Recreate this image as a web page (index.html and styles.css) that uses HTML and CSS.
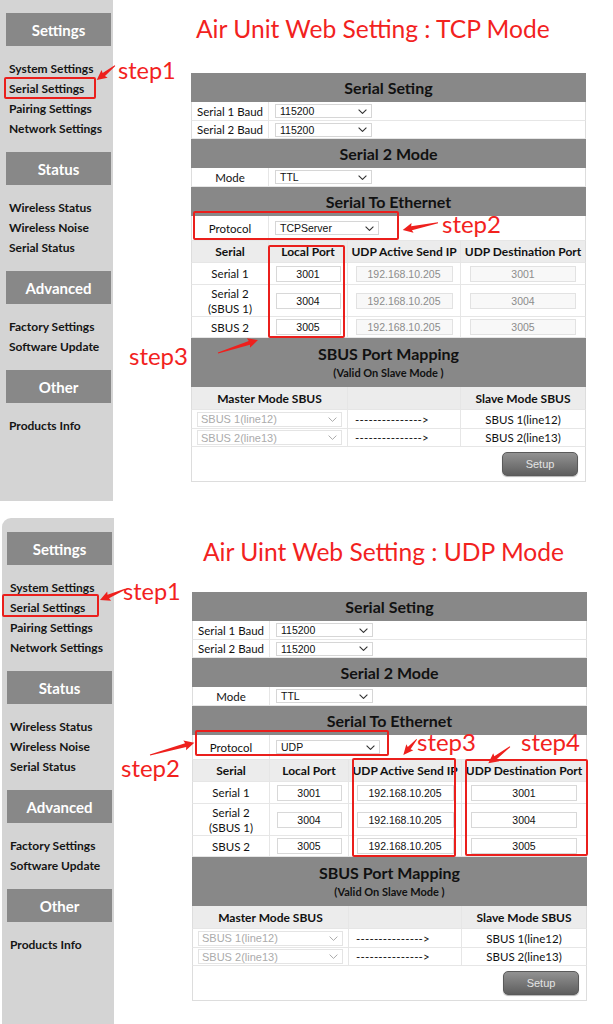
FILE: index.html
```html
<!DOCTYPE html>
<html>
<head>
<meta charset="utf-8">
<title>Air Unit Web Setting</title>
<link rel="stylesheet" href="styles.css">
</head>
<body>

<section class="panel panel--tcp">
  <aside class="sidebar">
    <div class="nav-head">Settings</div>
    <ul class="nav-list">
      <li>System Settings</li>
      <li>Serial Settings</li>
      <li>Pairing Settings</li>
      <li>Network Settings</li>
    </ul>
    <div class="nav-head">Status</div>
    <ul class="nav-list">
      <li>Wireless Status</li>
      <li>Wireless Noise</li>
      <li>Serial Status</li>
    </ul>
    <div class="nav-head">Advanced</div>
    <ul class="nav-list">
      <li>Factory Settings</li>
      <li>Software Update</li>
    </ul>
    <div class="nav-head">Other</div>
    <ul class="nav-list">
      <li>Products Info</li>
    </ul>
  </aside>

  <main class="main">
    <h1 class="title">Air Unit Web Setting : TCP Mode</h1>
    <div class="grid">
      <div class="sec">Serial Seting</div>
      <div class="row h19"><div class="c">Serial 1 Baud</div><div class="c span3"><div class="sel w97"><span>115200</span><svg class="chev" width="9" height="5" viewBox="0 0 9 5"><path d="M0.6 0.6 L4.5 4.4 L8.4 0.6"/></svg></div></div></div>
      <div class="row h18"><div class="c">Serial 2 Baud</div><div class="c span3"><div class="sel w97"><span>115200</span><svg class="chev" width="9" height="5" viewBox="0 0 9 5"><path d="M0.6 0.6 L4.5 4.4 L8.4 0.6"/></svg></div></div></div>
      <div class="sec">Serial 2 Mode</div>
      <div class="row h19"><div class="c">Mode</div><div class="c span3"><div class="sel w97"><span>TTL</span><svg class="chev" width="9" height="5" viewBox="0 0 9 5"><path d="M0.6 0.6 L4.5 4.4 L8.4 0.6"/></svg></div></div></div>
      <div class="sec">Serial To Ethernet</div>
      <div class="row h25"><div class="c">Protocol</div><div class="c span3"><div class="sel w104"><span>TCPServer</span><svg class="chev" width="9" height="5" viewBox="0 0 9 5"><path d="M0.6 0.6 L4.5 4.4 L8.4 0.6"/></svg></div></div></div>
      <div class="row h22 head"><div class="c">Serial</div><div class="c">Local Port</div><div class="c">UDP Active Send IP</div><div class="c">UDP Destination Port</div></div>
      <div class="row h22"><div class="c">Serial 1</div><div class="c"><div class="inp w65">3001</div></div><div class="c"><div class="inp inp--off w97">192.168.10.205</div></div><div class="c"><div class="inp inp--off w106">3001</div></div></div>
      <div class="row h32"><div class="c two">Serial 2<br>(SBUS 1)</div><div class="c"><div class="inp w65">3004</div></div><div class="c"><div class="inp inp--off w97">192.168.10.205</div></div><div class="c"><div class="inp inp--off w106">3004</div></div></div>
      <div class="row h21"><div class="c">SBUS 2</div><div class="c"><div class="inp w65">3005</div></div><div class="c"><div class="inp inp--off w97">192.168.10.205</div></div><div class="c"><div class="inp inp--off w106">3005</div></div></div>
      <div class="sec sec--map"><span>SBUS Port Mapping</span><span class="sec-sub">(Valid On Slave Mode )</span></div>
      <div class="row h23 head"><div class="c span2">Master Mode SBUS</div><div class="c"></div><div class="c">Slave Mode SBUS</div></div>
      <div class="row h19"><div class="c span2 left"><div class="sel sel--off w145"><span>SBUS 1(line12)</span><svg class="chev" width="9" height="5" viewBox="0 0 9 5"><path d="M0.6 0.6 L4.5 4.4 L8.4 0.6"/></svg></div></div><div class="c dash">---------------&gt;</div><div class="c">SBUS 1(line12)</div></div>
      <div class="row h18"><div class="c span2 left"><div class="sel sel--off w145"><span>SBUS 2(line13)</span><svg class="chev" width="9" height="5" viewBox="0 0 9 5"><path d="M0.6 0.6 L4.5 4.4 L8.4 0.6"/></svg></div></div><div class="c dash">---------------&gt;</div><div class="c">SBUS 2(line13)</div></div>
      <div class="row-setup"><div class="btn">Setup</div></div>
    </div>
  </main>

  <div class="note-box tcp-box1"></div>
  <div class="note-text tcp-step1">step1</div>
  <div class="note-box tcp-box2"></div>
  <div class="note-text tcp-step2">step2</div>
  <div class="note-box tcp-box3"></div>
  <div class="note-text tcp-step3">step3</div>
  <svg class="arrows" width="613" height="502" viewBox="0 0 613 502">
    <polygon transform="translate(115 66.7) rotate(142)" points="0,-0.5 14.2,-1.9 13.2,-5 23.2,0 13.2,5 14.2,1.9 0,0.5"/>
    <polygon transform="translate(438 223.7) rotate(168.3)" points="0,-0.5 27,-2 26,-5 36,0 26,5 27,2 0,0.5"/>
    <polygon transform="translate(218 354) rotate(-18)" points="0,-0.5 33,-2 32,-5 42,0 32,5 33,2 0,0.5"/>
  </svg>
</section>

<section class="panel panel--udp">
  <aside class="sidebar">
    <div class="nav-head">Settings</div>
    <ul class="nav-list">
      <li>System Settings</li>
      <li>Serial Settings</li>
      <li>Pairing Settings</li>
      <li>Network Settings</li>
    </ul>
    <div class="nav-head">Status</div>
    <ul class="nav-list">
      <li>Wireless Status</li>
      <li>Wireless Noise</li>
      <li>Serial Status</li>
    </ul>
    <div class="nav-head">Advanced</div>
    <ul class="nav-list">
      <li>Factory Settings</li>
      <li>Software Update</li>
    </ul>
    <div class="nav-head">Other</div>
    <ul class="nav-list">
      <li>Products Info</li>
    </ul>
  </aside>

  <main class="main">
    <h1 class="title">Air Uint Web Setting : UDP Mode</h1>
    <div class="grid">
      <div class="sec">Serial Seting</div>
      <div class="row h19"><div class="c">Serial 1 Baud</div><div class="c span3"><div class="sel w97"><span>115200</span><svg class="chev" width="9" height="5" viewBox="0 0 9 5"><path d="M0.6 0.6 L4.5 4.4 L8.4 0.6"/></svg></div></div></div>
      <div class="row h18"><div class="c">Serial 2 Baud</div><div class="c span3"><div class="sel w97"><span>115200</span><svg class="chev" width="9" height="5" viewBox="0 0 9 5"><path d="M0.6 0.6 L4.5 4.4 L8.4 0.6"/></svg></div></div></div>
      <div class="sec">Serial 2 Mode</div>
      <div class="row h19"><div class="c">Mode</div><div class="c span3"><div class="sel w97"><span>TTL</span><svg class="chev" width="9" height="5" viewBox="0 0 9 5"><path d="M0.6 0.6 L4.5 4.4 L8.4 0.6"/></svg></div></div></div>
      <div class="sec">Serial To Ethernet</div>
      <div class="row h25"><div class="c">Protocol</div><div class="c span3"><div class="sel w104"><span>UDP</span><svg class="chev" width="9" height="5" viewBox="0 0 9 5"><path d="M0.6 0.6 L4.5 4.4 L8.4 0.6"/></svg></div></div></div>
      <div class="row h22 head"><div class="c">Serial</div><div class="c">Local Port</div><div class="c">UDP Active Send IP</div><div class="c">UDP Destination Port</div></div>
      <div class="row h22"><div class="c">Serial 1</div><div class="c"><div class="inp w65">3001</div></div><div class="c"><div class="inp w97">192.168.10.205</div></div><div class="c"><div class="inp w106">3001</div></div></div>
      <div class="row h32"><div class="c two">Serial 2<br>(SBUS 1)</div><div class="c"><div class="inp w65">3004</div></div><div class="c"><div class="inp w97">192.168.10.205</div></div><div class="c"><div class="inp w106">3004</div></div></div>
      <div class="row h21"><div class="c">SBUS 2</div><div class="c"><div class="inp w65">3005</div></div><div class="c"><div class="inp w97">192.168.10.205</div></div><div class="c"><div class="inp w106">3005</div></div></div>
      <div class="sec sec--map"><span>SBUS Port Mapping</span><span class="sec-sub">(Valid On Slave Mode )</span></div>
      <div class="row h23 head"><div class="c span2">Master Mode SBUS</div><div class="c"></div><div class="c">Slave Mode SBUS</div></div>
      <div class="row h19"><div class="c span2 left"><div class="sel sel--off w145"><span>SBUS 1(line12)</span><svg class="chev" width="9" height="5" viewBox="0 0 9 5"><path d="M0.6 0.6 L4.5 4.4 L8.4 0.6"/></svg></div></div><div class="c dash">---------------&gt;</div><div class="c">SBUS 1(line12)</div></div>
      <div class="row h18"><div class="c span2 left"><div class="sel sel--off w145"><span>SBUS 2(line13)</span><svg class="chev" width="9" height="5" viewBox="0 0 9 5"><path d="M0.6 0.6 L4.5 4.4 L8.4 0.6"/></svg></div></div><div class="c dash">---------------&gt;</div><div class="c">SBUS 2(line13)</div></div>
      <div class="row-setup"><div class="btn">Setup</div></div>
    </div>
  </main>

  <div class="note-box udp-box1"></div>
  <div class="note-text udp-step1">step1</div>
  <div class="note-box udp-box2"></div>
  <div class="note-text udp-step2">step2</div>
  <div class="note-box udp-box3"></div>
  <div class="note-text udp-step3">step3</div>
  <div class="note-box udp-box4"></div>
  <div class="note-text udp-step4">step4</div>
  <svg class="arrows" width="613" height="502" viewBox="0 0 613 502">
    <polygon transform="translate(125 71.3) rotate(156.8)" points="0,-0.5 18.2,-1.9 17.2,-5 27.2,0 17.2,5 18.2,1.9 0,0.5"/>
    <polygon transform="translate(150 237) rotate(-15.5)" points="0,-0.5 37,-2 36,-5 46,0 36,5 37,2 0,0.5"/>
    <polygon transform="translate(416.7 221.3) rotate(130.5)" points="0,-0.4 11.6,-1.8 10.6,-4.6 20.6,0 10.6,4.6 11.6,1.8 0,0.4"/>
    <polygon transform="translate(510 228.7) rotate(142.6)" points="0,-0.5 18.3,-1.9 17.3,-5 27.3,0 17.3,5 18.3,1.9 0,0.5"/>
  </svg>
</section>

</body>
</html>
```

FILE: styles.css
```css
html, body {
  margin: 0;
  padding: 0;
  background: #ffffff;
}

body {
  font-family: Lato, "Open Sans", sans-serif;
  color: #111111;
  overflow: hidden;
}

.panel {
  position: relative;
  display: flex;
  align-items: flex-start;
  height: 502px;
}

.panel--tcp {
  margin-top: -1px;
}

.panel--udp {
  margin-top: 17px;
  height: 510px;
}

/* ---------- sidebar ---------- */
.sidebar {
  flex: none;
  align-self: stretch;
  width: 113px;
  box-sizing: border-box;
  padding: 14px 2px 0 6px;
  background: #d4d4d4;
}

.panel--udp .sidebar {
  margin-left: 2px;
  width: 112px;
  padding-left: 5px;
  border-top-left-radius: 9px;
}

.nav-head {
  height: 33px;
  background: #888888;
  color: #ffffff;
  font-weight: 700;
  font-size: 15px;
  display: flex;
  align-items: center;
  justify-content: center;
}

.nav-list {
  list-style: none;
  margin: 0;
  padding: 13px 0 13px 3px;
}

.nav-list li {
  height: 20px;
  line-height: 20px;
  font-size: 12px;
  font-weight: 700;
  color: #151515;
  white-space: nowrap;
}

/* ---------- main ---------- */
.main {
  flex: none;
  width: 395px;
  margin-left: 78px;
}

.title {
  margin: 14px 0 28px 5px;
  height: 32px;
  line-height: 32px;
  font-size: 24.6px;
  font-weight: 400;
  color: #f2221e;
  white-space: nowrap;
}

.panel--udp .title {
  margin: 18px 0 24px 11px;
}

.grid {
  width: 395px;
}

.sec {
  height: 29px;
  background: #888888;
  color: #111111;
  font-weight: 700;
  font-size: 16px;
  display: flex;
  align-items: center;
  justify-content: center;
}

.sec--map {
  height: 49px;
  flex-direction: column;
  line-height: 18px;
}

.sec-sub {
  margin-top: 2px;
  font-size: 11px;
  line-height: 16px;
}

.row {
  display: grid;
  grid-template-columns: 77px 79px 113px 1fr;
  box-sizing: border-box;
  border-left: 1px solid #dddddd;
  border-right: 1px solid #dddddd;
  border-bottom: 1px solid #e6e6e6;
  background: #ffffff;
  font-size: 11.5px;
}

.h18 { height: 18px; }
.h19 { height: 19px; }
.h21 { height: 21px; }
.h22 { height: 22px; }
.h23 { height: 23px; }
.h25 { height: 25px; }
.h32 { height: 32px; }

.c {
  display: flex;
  align-items: center;
  justify-content: center;
  border-right: 1px solid #e6e6e6;
  min-width: 0;
  white-space: nowrap;
}

.c:last-child {
  border-right: 0;
}

.two {
  text-align: center;
  line-height: 15px;
  white-space: normal;
}

.span3 {
  grid-column: 2 / 5;
  justify-content: flex-start;
  padding-left: 6px;
}

.span2 {
  grid-column: 1 / 3;
}

.left {
  justify-content: flex-start;
  padding-left: 5px;
}

.head {
  background: #ececec;
  font-weight: 700;
  font-size: 12px;
}

.dash {
  justify-content: flex-start;
  padding-left: 7px;
  letter-spacing: 0.2px;
}

/* ---------- form controls ---------- */
.sel {
  height: 14px;
  box-sizing: border-box;
  border: 1px solid #d6d6d6;
  background: #ffffff;
  display: flex;
  align-items: center;
  justify-content: space-between;
  padding: 0 4px 0 4px;
  font-family: "Liberation Sans", Arial, sans-serif;
  font-size: 10.5px;
  color: #111111;
}

.sel--off {
  height: 15px;
  color: #ababab;
  border-color: #e4e4e4;
  font-size: 11px;
  padding-left: 3px;
}

.chev {
  display: block;
  fill: none;
  stroke: #333333;
  stroke-width: 1.1;
}

.sel--off .chev {
  stroke: #a0a0a0;
  stroke-width: 0.9;
}

.inp {
  height: 16px;
  box-sizing: border-box;
  border: 1px solid #d8d8d8;
  background: #ffffff;
  display: flex;
  align-items: center;
  justify-content: center;
  font-family: "Liberation Sans", Arial, sans-serif;
  font-size: 10.5px;
  color: #111111;
}

.inp--off {
  color: #8c8c8c;
  background: #f8f8f8;
  border-color: #e2e2e2;
}

.w65 { width: 65px; }
.w97 { width: 97px; }
.w104 { width: 104px; }
.w106 { width: 106px; }
.w145 { width: 145px; }

.row-setup {
  height: 35px;
  box-sizing: border-box;
  border: 1px solid #dddddd;
  border-top: 0;
  display: flex;
  align-items: center;
  justify-content: flex-end;
  padding-right: 7px;
}

.btn {
  width: 76px;
  height: 24px;
  box-sizing: border-box;
  border-radius: 5px;
  border: 1px solid #5a5a5a;
  background: linear-gradient(#929292, #5e5e5e);
  box-shadow: 0 1px 1px rgba(0, 0, 0, 0.3);
  color: #e4e4e4;
  font-family: "Liberation Sans", Arial, sans-serif;
  font-size: 11px;
  display: flex;
  align-items: center;
  justify-content: center;
}

/* ---------- red annotations ---------- */
.note-box {
  position: absolute;
  box-sizing: border-box;
  border: 2.5px solid #ea1f1c;
  border-radius: 2px;
}

.note-text {
  position: absolute;
  color: #f2221e;
  font-size: 24px;
  line-height: 24px;
  white-space: nowrap;
}

.arrows {
  position: absolute;
  left: 0;
  top: 0;
  overflow: visible;
  pointer-events: none;
  fill: #ee201d;
}

.tcp-box1 { left: 4px; top: 78px; width: 92px; height: 22px; }
.tcp-step1 { left: 118px; top: 60px; font-size: 23.5px; line-height: 23.5px; }
.tcp-box2 { left: 193px; top: 212px; width: 206px; height: 29px; }
.tcp-step2 { left: 442px; top: 212.7px; }
.tcp-box3 { left: 268px; top: 246px; width: 77px; height: 93px; }
.tcp-step3 { left: 129px; top: 344.7px; }

.udp-box1 { left: 2px; top: 76px; width: 97px; height: 23px; }
.udp-step1 { left: 123px; top: 62px; font-size: 23.5px; line-height: 23.5px; }
.udp-box2 { left: 195px; top: 212px; width: 194px; height: 26px; }
.udp-step2 { left: 121px; top: 238px; }
.udp-box3 { left: 352px; top: 240px; width: 104px; height: 99px; }
.udp-step3 { left: 417px; top: 212.4px; }
.udp-box4 { left: 465px; top: 241px; width: 123px; height: 97px; }
.udp-step4 { left: 521px; top: 212.4px; }
```
